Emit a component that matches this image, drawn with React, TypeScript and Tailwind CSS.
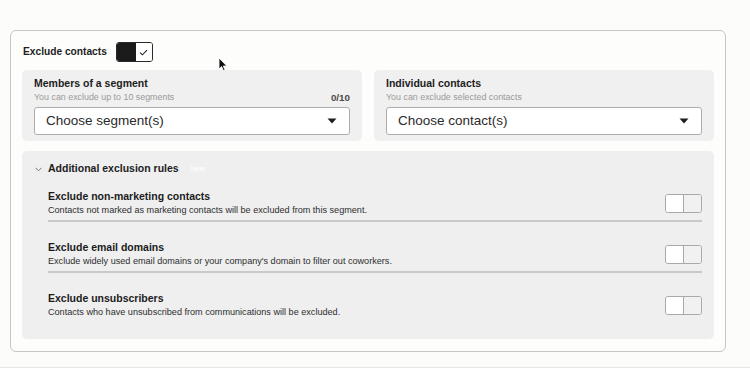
import React from "react";

const font = { fontFamily: '"Liberation Sans", Arial, sans-serif' };

function ToggleOn() {
  return (
    <div className="flex h-[20px] w-[37px] overflow-hidden rounded-[3px] border border-[#2a2a2a]">
      <div className="w-[19px] bg-[#1b1b1b]" />
      <div className="flex flex-1 items-center justify-center bg-white">
        <svg width="9" height="7" viewBox="0 0 9 7" fill="none">
          <path d="M1 3.6 L3.4 5.8 L8 1.2" stroke="#222" strokeWidth="1.1" />
        </svg>
      </div>
    </div>
  );
}

function ToggleOff() {
  return (
    <div className="flex h-[19px] w-[37px] shrink-0 overflow-hidden rounded-[3px] border border-[#a9a9a9]">
      <div className="w-[18px] border-r border-[#a9a9a9] bg-white" />
      <div className="flex-1 bg-[#f1f1f1]" />
    </div>
  );
}

function Caret() {
  return (
    <svg width="10" height="6" viewBox="0 0 10 6">
      <path d="M0.5 0.5 H9.5 L5 5.5 Z" fill="#1e1e1e" />
    </svg>
  );
}

function SelectPanel({
  title,
  sub,
  count,
  placeholder,
}: {
  title: string;
  sub: string;
  count?: string;
  placeholder: string;
}) {
  return (
    <div className="flex h-[71px] w-[340px] flex-col rounded-[5px] bg-[#f0f0f0] px-[12px] pt-[6px]">
      <div className="text-[10.5px] font-bold leading-[14px] text-[#1d1d1d]">{title}</div>
      <div className="mt-[1px] flex items-center justify-between text-[8.9px] leading-[13px]">
        <span className="text-[#9a9a9a]">{sub}</span>
        {count && <span className="text-[9.8px] font-bold text-[#4a4a4a]">{count}</span>}
      </div>
      <div className="mt-[3px] flex h-[28px] items-center justify-between rounded-[3px] border border-[#adadad] bg-white pl-[11px] pr-[12px]">
        <span className="text-[13.5px] text-[#2a2a2a]">{placeholder}</span>
        <Caret />
      </div>
    </div>
  );
}

function Rule({
  title,
  desc,
  cls,
}: {
  title: string;
  desc: string;
  cls: string;
}) {
  return (
    <div className={`flex items-center justify-between ${cls}`}>
      <div className="flex flex-col">
        <div className="text-[10.5px] font-bold leading-[14px] text-[#1c1c1c]">{title}</div>
        <div className="text-[9.1px] leading-[14px] text-[#2e2e2e]">{desc}</div>
      </div>
      <ToggleOff />
    </div>
  );
}

export default function App() {
  return (
    <div
      style={font}
      className="relative h-[368px] w-[750px] overflow-hidden border-b border-[#e6e6e6] bg-[#fcfcfa] pl-[10px] pt-[30px]"
    >
      <div className="flex h-[322px] w-[716px] flex-col rounded-[6px] border border-[#c6c6c6] bg-[#fdfdfb] px-[11px] pt-[11px]">
        <div className="flex items-center gap-[9px] pl-[1px]">
          <span className="text-[10.2px] font-bold text-[#1d1d1d]">Exclude contacts</span>
          <ToggleOn />
        </div>
        <div className="mt-[8px] flex gap-[12px]">
          <SelectPanel
            title="Members of a segment"
            sub="You can exclude up to 10 segments"
            count="0/10"
            placeholder="Choose segment(s)"
          />
          <SelectPanel
            title="Individual contacts"
            sub="You can exclude selected contacts"
            placeholder="Choose contact(s)"
          />
        </div>
        <div className="mt-[10px] flex h-[188px] flex-col rounded-[5px] bg-[#efefef] pl-[26px] pr-[12px] pt-[11px]">
          <div className="relative flex h-[14px] items-center">
            <svg
              className="absolute left-[-13px] top-[5px]"
              width="7"
              height="5"
              viewBox="0 0 7 5"
              fill="none"
            >
              <path d="M0.5 0.8 L3.5 3.8 L6.5 0.8" stroke="#666" strokeWidth="0.9" />
            </svg>
            <span className="text-[10.5px] font-bold text-[#1d1d1d]">Additional exclusion rules</span>
            <span className="ml-[12px] text-[7px] text-white">New</span>
          </div>
          <Rule
            title="Exclude non-marketing contacts"
            desc="Contacts not marked as marketing contacts will be excluded from this segment."
            cls="pt-[13px] pb-[3px] border-b-2 border-[#c9c9c9]"
          />
          <Rule
            title="Exclude email domains"
            desc="Exclude widely used email domains or your company's domain to filter out coworkers."
            cls="pt-[18px] pb-[3px] border-b-2 border-[#c9c9c9]"
          />
          <Rule
            title="Exclude unsubscribers"
            desc="Contacts who have unsubscribed from communications will be excluded."
            cls="pt-[18px]"
          />
        </div>
      </div>
      <svg
        className="absolute left-[218px] top-[57px]"
        width="10"
        height="15"
        viewBox="0 0 10 15"
      >
        <path
          d="M1 1 L1 12 L3.6 9.6 L5.4 13.6 L7 12.9 L5.3 9 L8.8 9 Z"
          fill="#111"
          stroke="#fff"
          strokeWidth="0.8"
        />
      </svg>
    </div>
  );
}
